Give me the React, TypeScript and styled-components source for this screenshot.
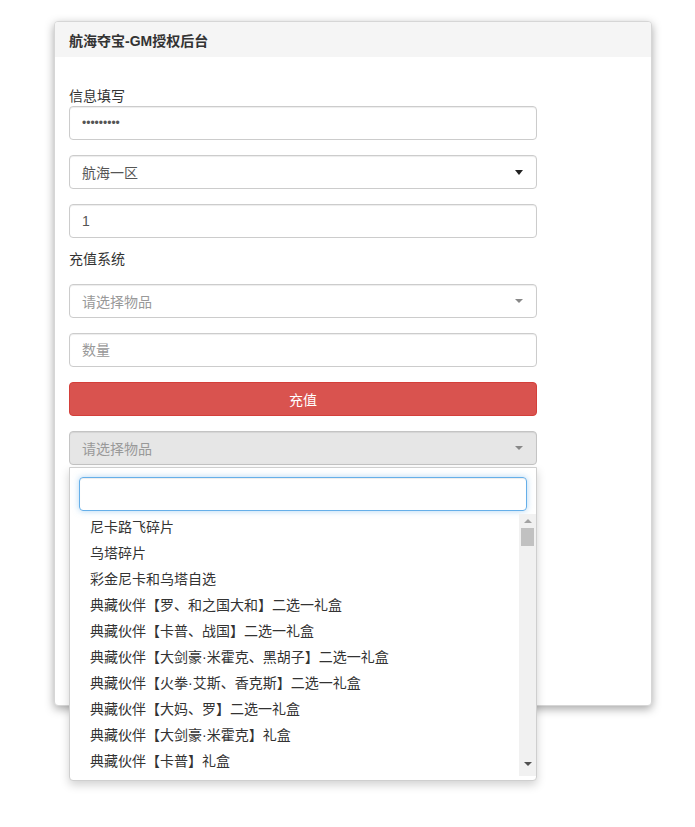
import React from "react";
import styled, { createGlobalStyle } from "styled-components";

const GlobalStyle = createGlobalStyle`
  html, body {
    margin: 0;
    padding: 0;
    background: #ffffff;
  }
  body {
    font-family: "Liberation Sans", "Noto Sans CJK SC", sans-serif;
    font-size: 14px;
    color: #333333;
  }
  * {
    box-sizing: border-box;
  }
`;

const Page = styled.div`
  min-height: 827px;
  padding: 21px 0 40px 54px;
`;

const Panel = styled.div`
  width: 598px;
  background: #ffffff;
  border: 1px solid #d6d6d6;
  border-radius: 4px;
  box-shadow: 0 3px 10px rgba(0, 0, 0, 0.35);
`;

const PanelHeading = styled.div`
  height: 35px;
  padding: 0 14px;
  display: flex;
  align-items: center;
  background: #f5f5f5;
  border-radius: 3px 3px 0 0;
  font-weight: bold;
  font-size: 14px;
  color: #333333;
`;

const PanelBody = styled.div`
  padding: 30px 14px 25px;
`;

const Form = styled.div`
  width: 468px;
  display: flex;
  flex-direction: column;
`;

const Label = styled.div<{ $mt?: number; $mb?: number }>`
  height: 19px;
  line-height: 19px;
  font-size: 14px;
  color: #333333;
  margin-top: ${(p) => p.$mt ?? 0}px;
  margin-bottom: ${(p) => p.$mb ?? 0}px;
`;

const TextInput = styled.input<{ $mb?: number; $dots?: boolean }>`
  display: block;
  width: 100%;
  height: 34px;
  padding: 6px 12px;
  margin: 0 0 ${(p) => p.$mb ?? 15}px;
  font-family: inherit;
  font-size: ${(p) => (p.$dots ? 12 : 14)}px;
  color: #555555;
  background: #ffffff;
  border: 1px solid #cccccc;
  border-radius: 4px;
  box-shadow: inset 0 1px 1px rgba(0, 0, 0, 0.075);
  outline: none;

  &::placeholder {
    color: #999999;
  }
`;

const SelectBox = styled.div<{ $disabled?: boolean; $placeholder?: boolean }>`
  position: relative;
  height: 34px;
  padding: 0 12px;
  margin-bottom: 15px;
  display: flex;
  align-items: center;
  justify-content: space-between;
  font-size: 14px;
  color: ${(p) => (p.$placeholder ? "#999999" : "#555555")};
  background: ${(p) => (p.$disabled ? "#e6e6e6" : "#ffffff")};
  border: 1px solid ${(p) => (p.$disabled ? "#c4c4c4" : "#cccccc")};
  border-radius: 4px;
  box-shadow: inset 0 1px 1px rgba(0, 0, 0, 0.075);
`;

const Caret = styled.span<{ $dark?: boolean }>`
  width: 0;
  height: 0;
  margin-right: 1px;
  border-left: 4px solid transparent;
  border-right: 4px solid transparent;
  border-top: ${(p) => (p.$dark ? "5px solid #222222" : "4px solid #888888")};
`;

const Button = styled.div<{ $variant: "danger" | "primary" | "dark"; $mt?: number }>`
  height: 34px;
  margin-top: ${(p) => p.$mt ?? 0}px;
  margin-bottom: 15px;
  display: flex;
  align-items: center;
  justify-content: center;
  color: #ffffff;
  font-size: 14px;
  border-radius: 4px;
  background: ${(p) =>
    p.$variant === "danger" ? "#d9534f" : p.$variant === "primary" ? "#2e6da4" : "#333a44"};
  border: 1px solid
    ${(p) => (p.$variant === "danger" ? "#d43f3a" : p.$variant === "primary" ? "#204d74" : "#222222")};
`;

const SelectWrap = styled.div`
  position: relative;
`;

const Dropdown = styled.div`
  position: absolute;
  top: 36px;
  left: 0;
  width: 468px;
  z-index: 10;
  background: #ffffff;
  border: 1px solid #cfcfcf;
  border-radius: 0 0 4px 4px;
  box-shadow: 0 4px 10px rgba(0, 0, 0, 0.18);
  padding: 9px 0 4px;
`;

const SearchField = styled.div`
  height: 34px;
  margin: 0 9px 3px;
  border: 1px solid #66afe9;
  border-radius: 4px;
  box-shadow: inset 0 1px 1px rgba(0, 0, 0, 0.075), 0 0 6px rgba(102, 175, 233, 0.5);
`;

const ListArea = styled.div`
  display: flex;
  height: 262px;
  overflow: hidden;
`;

const Options = styled.ul`
  flex: 1;
  list-style: none;
  margin: 0;
  padding: 0;
`;

const Option = styled.li`
  height: 26px;
  line-height: 26px;
  padding-left: 20px;
  font-size: 14px;
  color: #333333;
  white-space: nowrap;
`;

const ScrollTrack = styled.div`
  width: 17px;
  height: 262px;
  background: #f1f1f1;
  display: flex;
  flex-direction: column;
  align-items: center;
  padding-top: 5px;
`;

const ScrollArrow = styled.span<{ $down?: boolean }>`
  width: 0;
  height: 0;
  border-left: 4px solid transparent;
  border-right: 4px solid transparent;
  ${(p) => (p.$down ? "border-top: 4px solid #505050;" : "border-bottom: 4px solid #a3a3a3;")}
`;

const ScrollThumb = styled.div`
  width: 13px;
  height: 18px;
  margin-top: 5px;
  background: #c1c1c1;
`;

const ScrollSpacer = styled.div`
  flex: 1;
`;

const ScrollBottom = styled.div`
  height: 14px;
  display: flex;
  align-items: flex-start;
`;

const items = [
  "尼卡路飞碎片",
  "乌塔碎片",
  "彩金尼卡和乌塔自选",
  "典藏伙伴【罗、和之国大和】二选一礼盒",
  "典藏伙伴【卡普、战国】二选一礼盒",
  "典藏伙伴【大剑豪·米霍克、黑胡子】二选一礼盒",
  "典藏伙伴【火拳·艾斯、香克斯】二选一礼盒",
  "典藏伙伴【大妈、罗】二选一礼盒",
  "典藏伙伴【大剑豪·米霍克】礼盒",
  "典藏伙伴【卡普】礼盒",
];

export default function App() {
  return (
    <>
      <GlobalStyle />
      <Page>
        <Panel>
          <PanelHeading>航海夺宝-GM授权后台</PanelHeading>
          <PanelBody>
            <Form>
              <Label>信息填写</Label>
              <TextInput type="password" defaultValue="123456789" readOnly $dots />
              <SelectBox>
                <span>航海一区</span>
                <Caret $dark />
              </SelectBox>
              <TextInput type="text" defaultValue="1" readOnly $mb={12} />
              <Label $mb={15}>充值系统</Label>
              <SelectBox $placeholder>
                <span>请选择物品</span>
                <Caret />
              </SelectBox>
              <TextInput type="text" placeholder="数量" readOnly />
              <Button $variant="danger">充值</Button>
              <SelectWrap>
                <SelectBox $disabled $placeholder>
                  <span>请选择物品</span>
                  <Caret />
                </SelectBox>
                <Dropdown>
                  <SearchField />
                  <ListArea>
                    <Options>
                      {items.map((item) => (
                        <Option key={item}>{item}</Option>
                      ))}
                    </Options>
                    <ScrollTrack>
                      <ScrollArrow />
                      <ScrollThumb />
                      <ScrollSpacer />
                      <ScrollBottom>
                        <ScrollArrow $down />
                      </ScrollBottom>
                    </ScrollTrack>
                  </ListArea>
                </Dropdown>
              </SelectWrap>
              {/* controls covered by the open dropdown */}
              <Button $variant="primary" $mt={52} />
              <TextInput type="text" readOnly $mb={16} />
              <Button $variant="dark" />
            </Form>
          </PanelBody>
        </Panel>
      </Page>
    </>
  );
}
